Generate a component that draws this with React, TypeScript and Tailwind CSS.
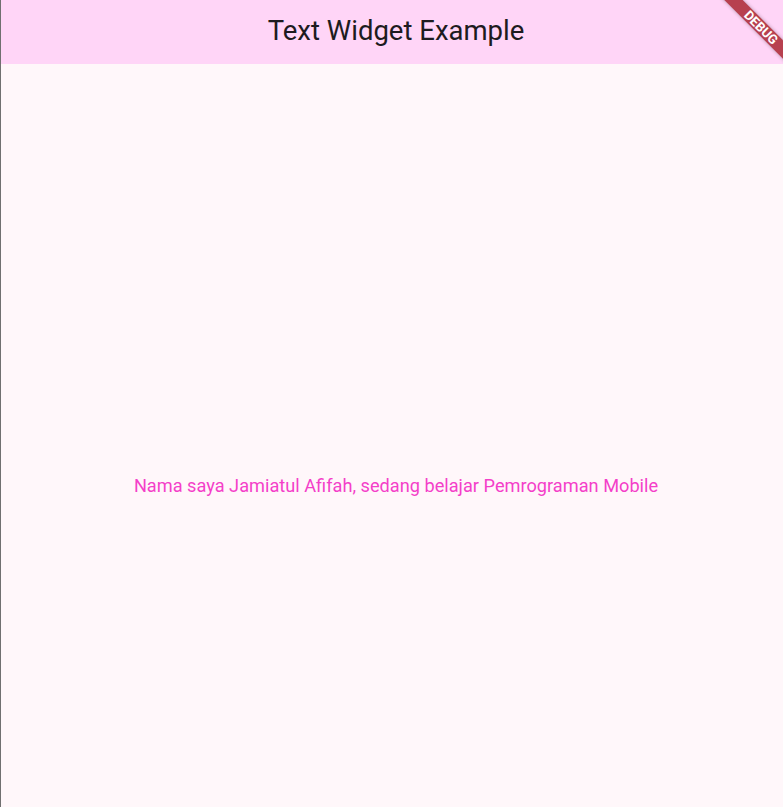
const App = () => {
  return (
    <div className="h-screen w-full overflow-hidden border-l border-[#707070] bg-[#fff7fa] relative" style={{ fontFamily: "Roboto, 'Noto Sans', sans-serif" }}>
      <div className="w-[790px] flex flex-col">
        <header className="h-16 bg-[#ffd5f7] flex items-center justify-center">
          <h1 className="text-[27.5px] text-[#1d1b20] leading-8 -mt-0.5">Text Widget Example</h1>
        </header>

        <main className="h-[844px] flex items-center justify-center">
          <p className="text-[18.2px] text-[#f43fc9]">
            Nama saya Jamiatul Afifah, sedang belajar Pemrograman Mobile
          </p>
        </main>

        {/* debug banner */}
        <div className="absolute top-[21px] left-[710px] w-[100px] h-[13px] bg-[#b7404f] rotate-45 flex items-center justify-center shadow-[0_0_4px_rgba(0,0,0,0.3)]">
          <span className="text-[13px] font-bold text-white leading-none">DEBUG</span>
        </div>
      </div>
    </div>
  );
};

export default App;
